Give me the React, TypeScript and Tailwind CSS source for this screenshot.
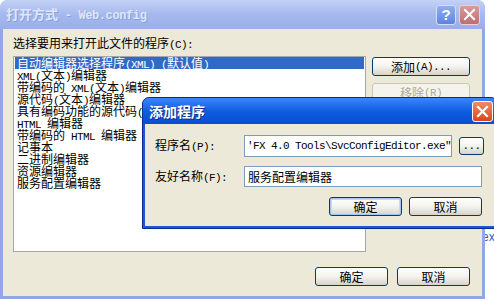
import React from "react";

const ASCII = "font-['Liberation_Mono',monospace] text-[11px] tracking-[-0.6px]";

function Mx({ t, a = ASCII }: { t: string; a?: string }) {
  const parts = t.split(/([\x20-\x7e]+)/).filter(Boolean);
  return (
    <>
      {parts.map((p, i) =>
        /^[\x20-\x7e]+$/.test(p) ? (
          <span key={i} className={a}>
            {p}
          </span>
        ) : (
          <span key={i}>{p}</span>
        )
      )}
    </>
  );
}

function XpButton({
  label,
  className = "",
  isDefault = false,
  disabled = false,
}: {
  label: string;
  className?: string;
  isDefault?: boolean;
  disabled?: boolean;
}) {
  const base =
    "flex items-center justify-center rounded-[3px] border text-[12px] leading-[12px] whitespace-pre ";
  const look = disabled
    ? "border-[#C9C7BA] text-[#ACA899] bg-[#F5F4EC] "
    : "border-[#003C74] text-black bg-linear-to-b from-[#FFFFFF] via-[#F3F3EE] to-[#D8D3C6] ";
  const def = isDefault
    ? "shadow-[inset_0_0_0_1px_#A6C4F0,inset_0_0_0_2px_#C6DAF8] "
    : "";
  return (
    <div className={base + look + def + className}>
      <Mx t={label} />
    </div>
  );
}

const items = [
  "自动编辑器选择程序(XML) (默认值)",
  "XML(文本)编辑器",
  "带编码的 XML(文本)编辑器",
  "源代码(文本)编辑器",
  "具有编码功能的源代码(文本)编辑器",
  "HTML 编辑器",
  "带编码的 HTML 编辑器",
  "记事本",
  "二进制编辑器",
  "资源编辑器",
  "服务配置编辑器",
];

export default function App() {
  return (
    <div className="relative w-[494px] h-[299px] overflow-hidden bg-white font-['Noto_Sans_CJK_SC',sans-serif] text-[12px] text-black">
      {/* text of the page behind */}
      <div className="absolute left-[482px] top-[230px] font-['Liberation_Sans',sans-serif] text-[12px] leading-[14px] text-[#2F5BC4]">
        ex
      </div>

      {/* outer window (inactive) */}
      <div className="relative z-10 w-[485px] h-[299px] flex flex-col rounded-t-[8px] overflow-hidden bg-[#93A6E6]">
        <div className="h-[29px] shrink-0 flex items-center pl-[6px] pr-[5px] bg-linear-to-b from-[#C3D1F6] via-[#A6B9EE] to-[#9AAEE8]">
          <div className="flex-1 whitespace-pre text-[13px] leading-[14px] font-bold text-[#DDE6FA] [text-shadow:1px_1px_0_#8C9FD8]">
            <Mx
              t="打开方式 - Web.config"
              a="font-['Liberation_Mono',monospace] text-[12px] tracking-[-0.4px] font-bold"
            />
          </div>
          <div className="flex items-center gap-[3px]">
            <div className="w-[20px] h-[20px] rounded-[3px] border border-[#D4DEF8] bg-linear-to-b from-[#8FAEF0] to-[#5F84E0] flex items-center justify-center text-white font-['Liberation_Sans',sans-serif] font-bold text-[15px] leading-none">
              ?
            </div>
            <div className="w-[21px] h-[20px] rounded-[3px] border border-[#E8D0D4] bg-linear-to-b from-[#D79C9C] to-[#BE6E72] flex items-center justify-center">
              <svg width="13" height="13" viewBox="0 0 13 13">
                <path d="M2 2 L11 11 M11 2 L2 11" stroke="#FFFFFF" strokeWidth="2" strokeLinecap="square" />
              </svg>
            </div>
          </div>
        </div>

        <div className="flex-1 mx-[3px] mb-[3px] bg-[#ECE9D8] pl-[10px] pr-[12px] pt-[8px] flex flex-col">
          <div className="h-[12px] leading-[12px] whitespace-pre">
            <Mx t="选择要用来打开此文件的程序(C):" />
          </div>
          <div className="mt-[7px] flex gap-[6px]">
            <div className="w-[353px] h-[196px] border border-[#A3A7AE] bg-white px-[1px] pt-[0px]">
              {items.map((it, i) => (
                <div
                  key={i}
                  className={
                    i === 0
                      ? "h-[12px] leading-[12px] pl-[2px] whitespace-pre bg-[#316AC5] text-white"
                      : "h-[12px] leading-[12px] pl-[2px] whitespace-pre"
                  }
                >
                  <Mx t={it} />
                </div>
              ))}
            </div>
            <div className="flex flex-col gap-[7px] mt-[1px]">
              <XpButton label="添加(A)..." className="w-[98px] h-[19px]" />
              <XpButton label="移除(R)" className="w-[98px] h-[19px]" disabled />
            </div>
          </div>
          <div className="mt-[15px] flex justify-end gap-[9px]">
            <XpButton label="确定" className="w-[73px] h-[19px]" />
            <XpButton label="取消" className="w-[73px] h-[19px]" />
          </div>
        </div>
      </div>

      {/* inner active dialog */}
      <div className="absolute z-20 left-[142px] top-[97px] w-[356px] h-[132px] flex flex-col rounded-t-[7px] overflow-hidden border border-[#0A2B8E] bg-[#1F55D8]">
        <div className="h-[26px] shrink-0 flex items-center pl-[6px] pr-[4px] bg-linear-to-b from-[#3A86F8] via-[#0F5DE0] to-[#0A4CD2]">
          <div className="flex-1 text-[14px] leading-[14px] font-bold text-white [text-shadow:1px_1px_0_#0A2E8A]">
            添加程序
          </div>
          <div className="w-[21px] h-[21px] rounded-[3px] border border-white bg-linear-to-b from-[#F08A66] to-[#D8431F] flex items-center justify-center">
            <svg width="13" height="13" viewBox="0 0 13 13">
              <path d="M2 2 L11 11 M11 2 L2 11" stroke="#FFFFFF" strokeWidth="2.2" strokeLinecap="square" />
            </svg>
          </div>
        </div>
        <div className="flex-1 mx-[2px] mb-[2px] bg-[#ECE9D8] pl-[10px] pt-[11px] flex flex-col">
          <div className="flex items-center h-[22px]">
            <div className="w-[89px] whitespace-pre leading-[12px]">
              <Mx t="程序名(P):" />
            </div>
            <div className="w-[208px] h-[22px] border border-[#7F9DB9] bg-white flex items-center pl-[2px] whitespace-pre overflow-hidden leading-[12px]">
              <Mx t={"'FX 4.0 Tools\\SvcConfigEditor.exe\""} />
            </div>
            <XpButton label="..." className="ml-[7px] w-[25px] h-[18px]" />
          </div>
          <div className="flex items-center h-[21px] mt-[9px]">
            <div className="w-[89px] whitespace-pre leading-[12px]">
              <Mx t="友好名称(F):" />
            </div>
            <div className="w-[238px] h-[21px] border border-[#7F9DB9] bg-white flex items-center pl-[3px] leading-[12px]">
              服务配置编辑器
            </div>
          </div>
          <div className="mt-[10px] w-[327px] flex justify-end gap-[7px]">
            <XpButton label="确定" className="w-[73px] h-[19px]" isDefault />
            <XpButton label="取消" className="w-[73px] h-[19px]" />
          </div>
        </div>
      </div>
    </div>
  );
}
